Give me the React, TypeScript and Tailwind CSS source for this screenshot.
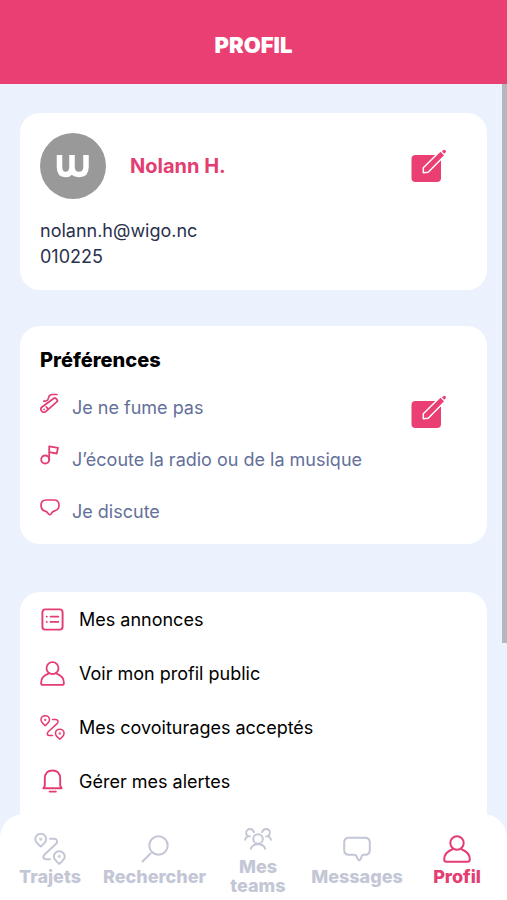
import type { ReactNode } from 'react';

type IconProps = { className?: string };

function Stroke({ className = '', box = '0 0 24 24', children }: IconProps & { box?: string; children: ReactNode }) {
  return (
    <svg viewBox={box} className={`shrink-0 ${className}`} fill="none" stroke="currentColor" strokeLinecap="round" strokeLinejoin="round" aria-hidden="true">
      {children}
    </svg>
  );
}

function RouteIcon({ className }: IconProps) {
  return (
    <Stroke className={className} box="0 0 31 31">
      <g strokeWidth="1.900">
        <path d="M6.500 13.200C3.600 10.600 1.200 8.700 1.200 6a5.300 5.200 0 0 1 10.600 0c0 2.700-2.400 4.600-5.300 7.200Z" />
        <circle cx="6.500" cy="6" r=".5" fill="currentColor" />
        <path d="M24.500 30c-2.900-2.600-5.300-4.500-5.300-7.200a5.300 5.200 0 0 1 10.600 0c0 2.700-2.400 4.600-5.300 7.200Z" />
        <circle cx="24.500" cy="22.800" r=".5" fill="currentColor" />
        <path d="M15.500 5.500h3.500c3.500 0 4.500 3 2.200 5.200L10.500 20.500C8 22.800 8.800 25.500 12 25.500h3.500" />
      </g>
    </Stroke>
  );
}

function PersonIcon({ className }: IconProps) {
  return (
    <Stroke className={className} box="0 0 28 28">
      <g strokeWidth="2">
        <circle cx="14" cy="8" r="6.700" />
        <path d="M9.500 14.200C4 16.200 1.200 20 1.200 24.500c0 1.500.8 2.200 2.200 2.200h21.200c1.400 0 2.200-.7 2.200-2.200 0-4.500-2.800-8.300-8.300-10.300" />
      </g>
    </Stroke>
  );
}

function BubbleIcon({ className }: IconProps) {
  return (
    <Stroke className={className} box="0 0 28 25">
      <path strokeWidth="2" d="M6 1.200h16c3.200 0 4.800 1.800 4.800 4.800v7.500c0 3-1.800 4.800-4.800 4.800h-1.500c-1.600 0-1.800 1-2.200 2.500-.5 1.800-1 3-2 3s-1.800-1.200-2.400-3c-.5-1.500-.9-2.500-2.400-2.500H6c-3.200 0-4.800-1.800-4.800-4.800V6c0-3 1.600-4.800 4.800-4.800Z" />
    </Stroke>
  );
}

function SpeechIcon({ className }: IconProps) {
  return (
    <Stroke className={className} box="0 0 20 17">
      <path strokeWidth="1.700" d="M6 1h8c3.200 0 5 2 5 5s-1.500 5.300-4.300 5.800c-1.600.3-2 .8-2.700 1.800-1.200 2-2.200 2.600-3.400 1.400L6.500 12.600C3 12 1 9.500 1 6.300 1 3 2.800 1 6 1Z" />
    </Stroke>
  );
}

function SearchIcon({ className }: IconProps) {
  return (
    <Stroke className={className} box="0 0 28 28">
      <g strokeWidth="2">
        <circle cx="17.500" cy="10.500" r="9.200" />
        <path d="M9.500 18.500 1.500 26.500" />
      </g>
    </Stroke>
  );
}

function TeamIcon({ className }: IconProps) {
  return (
    <Stroke className={className} box="0 0 28 22">
      <g strokeWidth="1.900">
        <circle cx="14" cy="11" r="4.800" />
        <path d="M6.800 20.800c.8-2.600 3.400-4.600 7.200-4.600s6.400 2 7.200 4.600" />
        <path d="M10 4.200C9.400 2.200 8 1 6 1 3.700 1 2.200 2.600 2.200 4.700S3.700 8.400 6 8.400M4 8.200C2.400 8.900 1.500 10 1 11.800" />
        <path d="M18 4.200C18.600 2.200 20 1 22 1c2.300 0 3.800 1.600 3.800 3.700S24.300 8.400 22 8.400M24 8.200c1.600.7 2.500 1.800 3 3.600" />
      </g>
    </Stroke>
  );
}

function CigaretteIcon({ className }: IconProps) {
  return (
    <Stroke className={className} box="0 0 20 20">
      <g strokeWidth="1.700">
        <path d="M2 14 14 5.200q1-.7 1.800.2l1.300 1.500q.8 1-.1 1.800L6 18.400a2.900 2.900 0 0 1-4-4.400Z" />
        <path d="M4 16.300h.1M6.200 13.800l1.500 1.800" />
        <path d="M3.800 8.200h1.700c1.500 0 2-.7 2.600-2.200l.7-2C9.400 2.200 10.200 1.500 12 1.500h5" />
      </g>
    </Stroke>
  );
}

function NoteIcon({ className }: IconProps) {
  return (
    <Stroke className={className} box="0 0 20 20">
      <g strokeWidth="1.800">
        <circle cx="5.200" cy="14.500" r="4" />
        <path d="M9.200 14.500V1.300l8.800 1.500-1.300 5.700-7.500-1.300" />
      </g>
    </Stroke>
  );
}

function ListIcon({ className }: IconProps) {
  return (
    <Stroke className={className} box="0 0 26 26">
      <rect x="2.500" y="2.500" width="21" height="21" rx="3" strokeWidth="2" />
      <path strokeWidth="2" d="M7 10h.1M11 10h8M7 15.500h.1M11 15.500h8" />
    </Stroke>
  );
}

function BellIcon({ className }: IconProps) {
  return (
    <Stroke className={className} box="0 0 26 26">
      <path strokeWidth="2" d="M5 17.500V10C5 4.500 8.300 1.500 13 1.500s8 3 8 8.500v7.500l1.500 2.500h-19L5 17.500ZM10 23.500h6.500" />
    </Stroke>
  );
}

function EditButton({ label }: { label: string }) {
  return (
    <button type="button" aria-label={label} className="mr-5 shrink-0 text-[#ea3f73]">
      <svg viewBox="0 0 36 36" className="size-9" aria-hidden="true">
        <rect x=".5" y="7" width="29.500" height="27" rx="4" fill="currentColor" />
        <path d="M12.300 24.700v-5L29.500 2.800l4.500 4.500L17.200 24.200Z" fill="currentColor" stroke="#fff" strokeWidth="1.500" strokeLinejoin="round" />
        <path d="m31 3.500 1.200-1.200c.7-.7 1.500-.7 2.200 0s.7 1.500 0 2.200L33.200 5.700Z" fill="currentColor" />
      </svg>
    </button>
  );
}

const preferences = [
  { icon: CigaretteIcon, label: 'Je ne fume pas' },
  { icon: NoteIcon, label: 'J’écoute la radio ou de la musique' },
  { icon: SpeechIcon, label: 'Je discute' },
];

const links = [
  { icon: ListIcon, label: 'Mes annonces' },
  { icon: PersonIcon, label: 'Voir mon profil public' },
  { icon: RouteIcon, label: 'Mes covoiturages acceptés' },
  { icon: BellIcon, label: 'Gérer mes alertes' },
];

const tabs = [
  { icon: RouteIcon, label: 'Trajets', size: 'size-8' },
  { icon: SearchIcon, label: 'Rechercher', size: 'size-7' },
  { icon: TeamIcon, label: 'Mes teams', size: 'w-7 h-6' },
  { icon: BubbleIcon, label: 'Messages', size: 'size-7' },
  { icon: PersonIcon, label: 'Profil', size: 'size-7', active: true },
];

export default function App() {
  return (
    <div className="relative flex h-screen flex-col overflow-hidden bg-[#ecf2fd] font-['Inter',sans-serif] text-black">
      <header className="flex h-21 shrink-0 items-center justify-center bg-[#ea3f73] pt-1.5">
        <h1 className="text-[22px] font-black text-white">PROFIL</h1>
      </header>

      <main className="flex-1 overflow-y-auto px-5 pt-[29px] [scrollbar-width:none]">
        <section className="rounded-[20px] bg-white p-5">
          <div className="flex items-center">
            <div className="flex size-[66px] shrink-0 items-center justify-center rounded-full bg-[#999999]">
              <svg viewBox="0 0 34 24" className="w-[34px] text-white" fill="none" stroke="currentColor" strokeWidth="5.500" role="img" aria-label="wigo">
                <path d="M3.500 1v12c0 5 2 7.500 6 7.500s6.500-2.500 6.500-7.500V1M16 13c0 5 2.500 7.500 7 7.500s7-2.500 7-7.500V1" />
              </svg>
            </div>
            <h2 className="ml-6 flex-1 text-[20px] font-bold text-[#e33d72]">Nolann H.</h2>
            <EditButton label="Modifier le profil" />
          </div>
          <div className="mt-[19px] text-[18px] leading-[26px] text-[#2b304d]">
            <p>nolann.h@wigo.nc</p>
            <p>010225</p>
          </div>
        </section>

        <section className="mt-9 rounded-[20px] bg-white px-5 pt-5 pb-[7px]">
          <h2 className="text-[20px] leading-7 font-extrabold">Préférences</h2>
          <div className="mt-[7px] flex items-start">
            <ul className="flex-1">
              {preferences.map(({ icon: Icon, label }) => (
                <li key={label} className="flex h-[52px] items-center text-[18px] text-[#64709a]">
                  <Icon className="mr-3 mb-2 w-5 text-[#e33d72]" />
                  {label}
                </li>
              ))}
            </ul>
            <div className="flex h-[62px] items-center">
              <EditButton label="Modifier les préférences" />
            </div>
          </div>
        </section>

        <section className="mt-12 rounded-[20px] bg-white px-5 pb-24">
          <ul>
            {links.map(({ icon: Icon, label }) => (
              <li key={label}>
                <a href="#" className="flex h-[54px] items-center text-[18px]">
                  <Icon className="mr-[14px] size-[25px] text-[#e33d72]" />
                  {label}
                </a>
              </li>
            ))}
          </ul>
        </section>
      </main>

      <div className="absolute top-21 right-0 h-[559px] w-[5px] bg-[#b4b8bd]" />

      <nav className="absolute inset-x-0 bottom-0 grid h-[86px] grid-cols-[100fr_109fr_98fr_100fr_100fr] items-center rounded-t-[24px] bg-white pt-1">
        {tabs.map(({ icon: Icon, label, size, active }) => (
          <a
            key={label}
            href="#"
            className={`flex min-w-0 flex-col items-center text-center text-[18px] leading-[19px] font-extrabold ${active ? 'text-[#e33d72]' : 'text-[#c3c7d5]'}`}
          >
            <span className="mb-0.5 flex h-8 items-center">
              <Icon className={size} />
            </span>
            <span className="w-min">{label}</span>
          </a>
        ))}
      </nav>
    </div>
  );
}
